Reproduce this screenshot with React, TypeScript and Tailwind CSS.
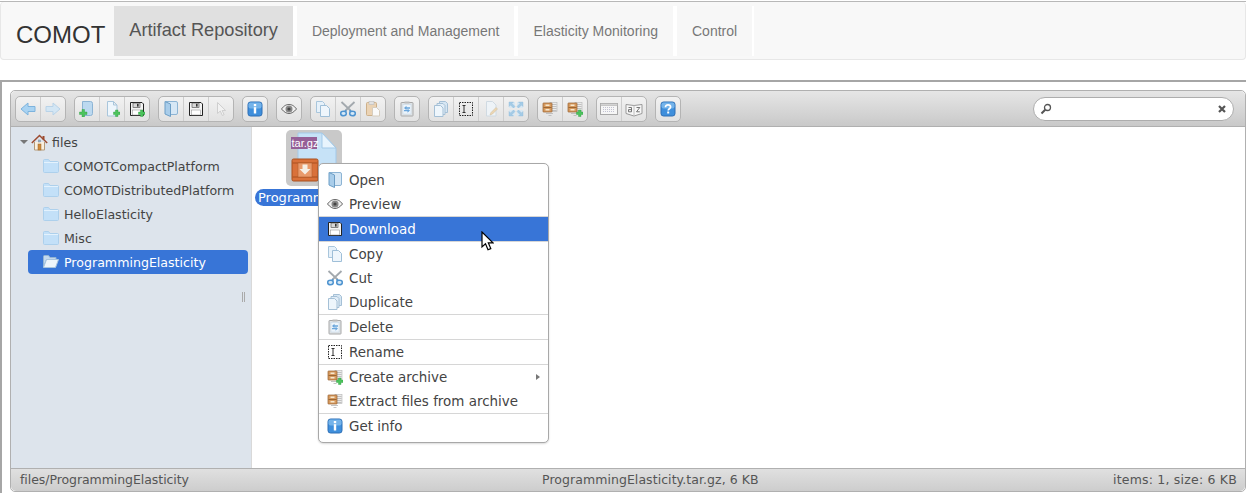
import type { ReactNode } from "react";

type IconProps = { className?: string };

function Svg({ children, className }: { children: ReactNode; className?: string }) {
	return (
		<svg viewBox="0 0 16 16" width="16" height="16" className={className}>
			{children}
		</svg>
	);
}

function Plus() {
	return <path d="M9.500 11h2V9h2.500v2h2v2.500h-2v2h-2.500v-2h-2z" fill="#4cc35c" stroke="#2b9c40" strokeWidth=".4" />;
}

function BackIcon() {
	return (
		<Svg>
			<path d="M1 8l7-6v3.500h7v5H8V14z" fill="#a9d3f2" stroke="#7db3dd" />
		</Svg>
	);
}

function ForwardIcon() {
	return (
		<Svg>
			<path d="M15 8L8 2v3.500H1v5h7V14z" fill="#d3e6f4" stroke="#b9d3e8" />
		</Svg>
	);
}

function FolderBook({ className }: IconProps) {
	return (
		<Svg className={className}>
			<path d="M3 .5h10a1.500 1.500 0 011.500 1.500v10a1.500 1.500 0 01-1.500 1.500H7z" fill="#d6e7f5" stroke="#8db4d4" />
			<path d="M2 .5l5.500 2.500v12.500L2 13z" fill="#a9cdea" stroke="#6c9ec6" />
		</Svg>
	);
}

function PageShape({ fill = "#eef6fc", stroke = "#a9c6dc" }: { fill?: string; stroke?: string }) {
	return <path d="M3.500 .5h6l3.500 3.500v11h-9.500z M9.500 .5V4h3.500" fill={fill} stroke={stroke} />;
}

function MkdirIcon() {
	return (
		<Svg>
			<path d="M3.500 .5h8a2 2 0 012 2v10a2 2 0 01-2 2h-8z" fill="#bcd9f0" stroke="#8db4d4" />
			<path d="M.5 11h2.500V8.500h2.500V11H8v2.500H5.500V16H3v-2.500H.5z" fill="#4cc35c" stroke="#2b9c40" strokeWidth=".4" />
		</Svg>
	);
}

function MkfileIcon() {
	return (
		<Svg>
			<PageShape />
			<Plus />
		</Svg>
	);
}

function FloppyShape() {
	return (
		<>
			<path d="M1.500 1.500h11.500l1.500 1.500v11.500h-13z" fill="#f4f4f4" stroke="#222" />
			<rect x="4" y="2" width="7" height="4.500" fill="#d8d8d8" stroke="#444" strokeWidth=".6" />
			<rect x="8" y="2.800" width="1.600" height="2.800" fill="#333" />
			<rect x="3.500" y="9" width="9" height="5" fill="#fff" stroke="#888" strokeWidth=".5" />
		</>
	);
}

function UploadIcon() {
	return (
		<Svg>
			<FloppyShape />
			<Plus />
		</Svg>
	);
}

function FloppyIcon({ className }: IconProps) {
	return (
		<Svg className={className}>
			<FloppyShape />
		</Svg>
	);
}

function SelectIcon() {
	return (
		<Svg>
			<path d="M4.500 1.500v11l2.800-2.500 2 4.500 1.800-.8-2-4.200h3.500z" fill="#f2f2f2" stroke="#cfcfcf" />
		</Svg>
	);
}

function InfoIcon({ className }: IconProps) {
	return (
		<Svg className={className}>
			<rect x="1" y="1" width="14" height="14" rx="2.500" fill="#3f8fdc" stroke="#2f6fb5" />
			<rect x="1.500" y="1.500" width="13" height="6" rx="2" fill="#74b3ea" />
			<rect x="6.800" y="3" width="2.400" height="2.200" fill="#fff" />
			<rect x="6.800" y="6.200" width="2.400" height="6.300" fill="#fff" />
		</Svg>
	);
}

function EyeIcon({ className }: IconProps) {
	return (
		<Svg className={className}>
			<path d="M.5 8C3 4.500 5.500 3.500 8 3.500s5 1 7.500 4.500C13 11 10.500 12.500 8 12.500S3 11 .5 8z" fill="#f1f1f1" stroke="#666" />
			<circle cx="8" cy="8" r="3.500" fill="#888" />
			<circle cx="8" cy="8" r="1.600" fill="#444" />
		</Svg>
	);
}

function CopyIcon({ className }: IconProps) {
	return (
		<Svg className={className}>
			<path d="M1.500 .5h6l2 2v9h-8z" fill="#e6f1fa" stroke="#a9c6dc" />
			<path d="M5.500 4.500h6l3 3v8h-9z" fill="#eff6fc" stroke="#9fbfd8" />
		</Svg>
	);
}

function CutIcon({ className }: IconProps) {
	return (
		<Svg className={className}>
			<path d="M1.500 1l9 8.500M14.500 1l-9 8.500" stroke="#a3a9ae" strokeWidth="1.800" fill="none" />
			<path d="M6.500 9.500L4 11" stroke="#4f94d0" strokeWidth="2" />
			<path d="M9.500 9.500L12 11" stroke="#4f94d0" strokeWidth="2" />
			<ellipse cx="3.500" cy="12.500" rx="2.800" ry="2.200" fill="#d6e9f7" stroke="#4f94d0" strokeWidth="1.500" />
			<ellipse cx="12.500" cy="12.500" rx="2.800" ry="2.200" fill="#d6e9f7" stroke="#4f94d0" strokeWidth="1.500" />
		</Svg>
	);
}

function PasteIcon() {
	return (
		<Svg>
			<rect x="1.500" y="1.500" width="10" height="13" rx="1" fill="#ebd3b4" stroke="#cdb08a" />
			<rect x="4" y=".5" width="5" height="3" fill="#e2e2e2" stroke="#bdbdbd" strokeWidth=".6" />
			<path d="M7.500 6.500h4l3 3v5.500h-7z" fill="#fafafa" stroke="#d6cdbf" />
		</Svg>
	);
}

function DeleteIcon({ className }: IconProps) {
	return (
		<Svg className={className}>
			<rect x="2" y="1.500" width="12" height="13.500" rx=".5" fill="#dfe3e6" stroke="#a8a8a8" />
			<rect x="5.500" y=".5" width="5" height="2" fill="#bbb" />
			<rect x="4" y="3.500" width="8" height="9.500" fill="#eef5fb" stroke="#c3d6e5" strokeWidth=".5" />
			<path d="M5 7l2.500-2.200v1.500H11v1.400H7.500v1.500zM11 9.500L8.500 7.700v1.200H5v1.400h3.500v1.500z" fill="#6aa6dc" />
		</Svg>
	);
}

function DuplicateIcon({ className }: IconProps) {
	return (
		<Svg className={className}>
			<path d="M6.500 .5h6l2 2v9h-8z" fill="#d6e6f3" stroke="#a5c0d6" />
			<path d="M4 2.500h6l2 2v9H4z" fill="#e2eef8" stroke="#a5c0d6" />
			<path d="M1.500 4.500h6l2.500 2.500v8.500h-8.500z" fill="#eef6fc" stroke="#a5c0d6" />
		</Svg>
	);
}

function RenameIcon({ className }: IconProps) {
	return (
		<Svg className={className}>
			<rect x="1.500" y="1.500" width="13" height="13" fill="none" stroke="#222" strokeDasharray="1.500 1" />
			<path d="M4.500 4.500h3M4.500 11.500h3M6 4.500v7" stroke="#333" fill="none" />
		</Svg>
	);
}

function EditIcon() {
	return (
		<Svg>
			<path d="M3.500 .5h6l3.500 3.500v11h-9.500z" fill="#eef3f7" stroke="#d0dae2" />
			<path d="M7 14l1-2.500 5-5 1.500 1.500-5 5z" fill="#ecd7b4" stroke="#cfbb97" strokeWidth=".5" />
		</Svg>
	);
}

function ResizeIcon() {
	return (
		<Svg>
			<rect x="1" y="1" width="6" height="6" fill="#d9e8f3" />
			<rect x="9" y="1" width="6" height="6" fill="#d9e8f3" />
			<rect x="1" y="9" width="6" height="6" fill="#d9e8f3" />
			<rect x="9" y="9" width="6" height="6" fill="#d9e8f3" />
			<path d="M1 1h4.500L4 2.500 7 5.500 5.500 7 2.500 4 1 5.500zM15 1v4.500L13.500 4l-3 3L9 5.500l3-3L10.500 1zM1 15v-4.500L2.500 12l3-3L7 10.500l-3 3L5.500 15zM15 15h-4.500l1.500-1.500-3-3L10.500 9l3 3 1.500-1.500z" fill="#a4cbe6" stroke="#93bcd9" strokeWidth=".4" />
		</Svg>
	);
}

function ArchiveShape() {
	return (
		<>
			<rect x="8" y="1.500" width="7" height="9" fill="#ececec" stroke="#b5b5b5" strokeWidth=".6" />
			<path d="M10 3.500h4.500M10 5.500h4.500M10 7.500h4.500M10 9.500h4.500" stroke="#a5a5a5" strokeWidth=".6" />
			<rect x="1" y="2" width="9" height="9" rx=".5" fill="#d69a5f" stroke="#96602f" strokeWidth=".7" />
			<path d="M1.500 6.500h8" stroke="#8d5a2a" strokeWidth=".8" />
			<rect x="3.500" y="3.500" width="4" height="1.500" fill="#f5e8d0" />
			<rect x="3.500" y="8" width="4" height="1.500" fill="#f5e8d0" />
			<path d="M4 12.500h7M6.500 14.500h3" stroke="#b5b5b5" strokeWidth=".8" />
		</>
	);
}

function ExtractIcon({ className }: IconProps) {
	return (
		<Svg className={className}>
			<ArchiveShape />
		</Svg>
	);
}

function ArchiveIcon({ className }: IconProps) {
	return (
		<Svg className={className}>
			<ArchiveShape />
			<Plus />
		</Svg>
	);
}

function ViewIcon() {
	return (
		<svg viewBox="0 0 18 16" width="18" height="16">
			<rect x=".5" y="2.500" width="17" height="11" fill="#f6f6f6" stroke="#a8a8a8" />
			<rect x=".5" y="2.500" width="17" height="2" fill="#d3d3d3" stroke="#a8a8a8" strokeWidth=".5" />
			<path d="M3 6.500h12M3 8.500h12M3 10.500h12" stroke="#c2c2d2" strokeDasharray="1 1" fill="none" />
		</svg>
	);
}

function SortIcon() {
	return (
		<svg viewBox="0 0 18 16" width="18" height="16">
			<path d="M1 3.500l8 1 8-1v9l-8 2.500-8-2.500z" fill="#f7f7f7" stroke="#999" />
			<path d="M9 4.500v10" stroke="#c0c0c0" />
			<path d="M3.500 6.500h3v4.300h-3v-2.200h3M11.500 6.500h3.300l-3.300 4.300h3.300" fill="none" stroke="#666" strokeWidth=".9" />
		</svg>
	);
}

function HelpIcon() {
	return (
		<Svg>
			<rect x="1" y="1" width="14" height="14" rx="2.500" fill="#3f8fdc" stroke="#2f6fb5" />
			<rect x="1.500" y="1.500" width="13" height="6" rx="2" fill="#74b3ea" />
			<path d="M5.500 6.200C5.500 4.500 6.700 3.800 8 3.800c1.500 0 2.600.8 2.600 2.100 0 1.800-2.400 1.900-2.400 3.600" fill="none" stroke="#fff" strokeWidth="1.700" />
			<rect x="7.200" y="10.500" width="2" height="2" fill="#fff" />
		</Svg>
	);
}

function FolderIcon() {
	return (
		<svg viewBox="0 0 16 14" width="16" height="14">
			<path d="M.5 1.500a1 1 0 011-1h4l1.500 2h7.500a1 1 0 011 1v9a1 1 0 01-1 1h-13a1 1 0 01-1-1z" fill="#c3e0f8" stroke="#add0ec" />
			<path d="M1 3.500h14" stroke="#e4f2fd" />
		</svg>
	);
}

function OpenFolderIcon() {
	return (
		<svg viewBox="0 0 16 14" width="16" height="14">
			<path d="M.5 1.500a1 1 0 011-1h4l1.500 2h6v2H3.500L.5 12z" fill="#c3d9ee" stroke="#93b4d3" />
			<path d="M3.500 4.500h12l-3 8H.5z" fill="#eef5fb" stroke="#a8c5de" />
		</svg>
	);
}

function HomeIcon() {
	return (
		<svg viewBox="0 0 17 17" width="17" height="17">
			<path d="M3.500 8v8h10V8" fill="#f9efdf" stroke="#b59a78" />
			<path d="M.8 9l7.700-7.500L16.200 9" fill="none" stroke="#9c4a2f" strokeWidth="1.500" />
			<rect x="11.500" y="2" width="2" height="3.500" fill="#9c4a2f" />
			<rect x="7" y="10" width="3" height="6" fill="#d08a3a" stroke="#9b6424" strokeWidth=".5" />
			<rect x="7.500" y="6" width="2" height="2" fill="#8fb6d8" stroke="#777" strokeWidth=".4" />
		</svg>
	);
}

function Cursor() {
	return (
		<svg viewBox="0 0 13 20" width="13" height="20" className="absolute left-[229px] top-[104px]">
			<path d="M1 1v15l3.500-3.200 2.500 6 2.800-1.200-2.500-5.800H12z" fill="#fff" stroke="#000" strokeWidth="1.200" />
		</svg>
	);
}

const toolbarSets: ReactNode[][] = [
	[<BackIcon />, <ForwardIcon />],
	[<MkdirIcon />, <MkfileIcon />, <UploadIcon />],
	[<FolderBook />, <FloppyIcon />, <SelectIcon />],
	[<InfoIcon />],
	[<EyeIcon />],
	[<CopyIcon />, <CutIcon />, <PasteIcon />],
	[<DeleteIcon />],
	[<DuplicateIcon />, <RenameIcon />, <EditIcon />, <ResizeIcon />],
	[<ExtractIcon />, <ArchiveIcon />],
	[<ViewIcon />, <SortIcon />],
	[<HelpIcon />],
];

function ToolbarSet({ icons }: { icons: ReactNode[] }) {
	return (
		<div className="flex h-[26px] rounded-[5px] border border-[#b4b4b4] bg-gradient-to-b from-[#f2f2f2] to-[#e2e2e2]">
			{icons.map((icon, i) => (
				<div
					key={i}
					className="flex w-[25px] items-center justify-center border-l border-[#cdcdcd] first:w-[24px] first:border-l-0"
				>
					{icon}
				</div>
			))}
		</div>
	);
}

function NavTab({ label, active }: { label: string; active?: boolean }) {
	if (active) {
		return (
			<div className="flex h-[50px] items-center bg-[#e0e0e0] px-[15px] text-[18.200px] text-[#555]">
				{label}
			</div>
		);
	}
	return (
		<div className="flex h-[50px] items-center bg-[#f7f7f7] px-[15px] pt-[1px] text-[14px] text-[#777]">
			{label}
		</div>
	);
}

function TreeRow({ label, selected }: { label: string; selected?: boolean }) {
	return (
		<div
			className={
				selected
					? "flex h-[24px] items-center rounded-[4px] bg-[#3875d7] pl-[15px] text-white"
					: "flex h-[24px] items-center pl-[15px] text-[#444]"
			}
		>
			{selected ? <OpenFolderIcon /> : <FolderIcon />}
			<span className="ml-[5px] pt-[2px]">{label}</span>
		</div>
	);
}

function MenuRow({
	icon,
	label,
	hover,
	arrow,
}: {
	icon: ReactNode;
	label: string;
	hover?: boolean;
	arrow?: boolean;
}) {
	return (
		<div
			className={
				hover
					? "flex h-[24px] items-center bg-[#3875d7] pl-[8px] text-white"
					: "flex h-[24px] items-center pl-[8px] text-[#444]"
			}
		>
			{icon}
			<span className="ml-[6px] pt-[2px]">{label}</span>
			{arrow && (
				<span className="ml-auto mr-[8px] h-0 w-0 border-y-[3.500px] border-l-[4px] border-y-transparent border-l-[#777]" />
			)}
		</div>
	);
}

function MenuSep() {
	return <div className="h-px bg-[#d6d6d6]" />;
}

function ContextMenu() {
	return (
		<div className="absolute left-[66px] top-[36px] w-[231px] rounded-[5px] border border-[#a8a8a8] bg-white py-[4px] text-[13.440px] shadow-[0_1px_2px_rgba(0,0,0,0.15)]">
			<MenuRow icon={<FolderBook />} label="Open" />
			<MenuRow icon={<EyeIcon />} label="Preview" />
			<MenuSep />
			<MenuRow icon={<FloppyIcon />} label="Download" hover />
			<MenuSep />
			<MenuRow icon={<CopyIcon />} label="Copy" />
			<MenuRow icon={<CutIcon />} label="Cut" />
			<MenuRow icon={<DuplicateIcon />} label="Duplicate" />
			<MenuSep />
			<MenuRow icon={<DeleteIcon />} label="Delete" />
			<MenuSep />
			<MenuRow icon={<RenameIcon />} label="Rename" />
			<MenuSep />
			<MenuRow icon={<ArchiveIcon />} label="Create archive" arrow />
			<MenuRow icon={<ExtractIcon />} label="Extract files from archive" />
			<MenuSep />
			<MenuRow icon={<InfoIcon />} label="Get info" />
		</div>
	);
}

function TarIcon() {
	return (
		<div className="ml-[34px] mt-[3px] h-[56px] w-[56px] rounded-[5px] bg-[#c9c9c9]">
			<svg viewBox="0 0 56 56" width="56" height="56">
				<path d="M12 3h24l14 15v32H12z" fill="#c6e2f7" stroke="#a3c9e8" />
				<path d="M36 3l14 15H36z" fill="#e8f4fd" stroke="#a3c9e8" />
				<rect x="5" y="7" width="26" height="12" fill="#955f97" />
				<text x="5.500" y="16.800" fontSize="11" fill="#fff" fontFamily="'Liberation Sans', sans-serif">
					tar.gz
				</text>
				<rect x="6" y="29" width="26" height="22" rx="1.500" fill="#d9713a" stroke="#a9501f" />
				<path d="M6.500 33h25M6.500 47h25" stroke="#a9501f" />
				<rect x="12" y="33" width="14" height="14" fill="#e99a6b" stroke="#b4602f" strokeWidth=".6" />
				<path d="M16.500 34.500h5v4.500h3l-5.500 5.500-5.500-5.500h3z" fill="#f6efe6" />
			</svg>
		</div>
	);
}

export default function App() {
	return (
		<div className="h-[493px] w-[1246px] overflow-hidden bg-white font-['Liberation_Sans',Arial,sans-serif]">
			<div className="mt-px h-px bg-[#b8b8b8]" />
			<div className="h-[58px] rounded-[4px] border-x border-b border-[#e7e7e7] bg-[#f8f8f8]">
				<div className="flex items-start pt-[4px]">
					<div className="ml-[15px] mr-[9px] flex h-[50px] items-center pt-[7px] text-[24px] leading-none text-[#333]">
						COMOT
					</div>
					<div className="flex gap-[4px] bg-white pr-[2px]">
						<NavTab label="Artifact Repository" active />
						<NavTab label="Deployment and Management" />
						<NavTab label="Elasticity Monitoring" />
						<NavTab label="Control" />
					</div>
				</div>
			</div>

			<div className="mt-[20px] h-[413px] border-l-2 border-t-2 border-[#a6a6a6] pl-[8px] pt-[8px]">
				<div className="flex h-[402px] w-[1236px] flex-col rounded-[5px] border border-[#b0b0b0] font-['DejaVu_Sans',sans-serif] text-[12.600px]">
					<div className="flex h-[36px] shrink-0 items-center gap-[8px] rounded-t-[5px] border-b border-[#b0b0b0] bg-gradient-to-b from-[#e6e6e6] to-[#c9c9c9] pl-[4px]">
						{toolbarSets.map((icons, i) => (
							<ToolbarSet key={i} icons={icons} />
						))}
						<div className="ml-auto mr-[11px] flex h-[24px] w-[201px] items-center justify-between rounded-full border border-[#adadad] bg-white px-[6px]">
							<svg viewBox="0 0 12 12" width="12" height="12">
								<circle cx="7.500" cy="4.500" r="3" fill="none" stroke="#555" strokeWidth="1.300" />
								<path d="M5.200 6.800L1.500 10.500" stroke="#555" strokeWidth="2" />
							</svg>
							<svg viewBox="0 0 10 10" width="10" height="10">
								<path d="M2 2l6 6M8 2l-6 6" stroke="#555" strokeWidth="2.200" />
							</svg>
						</div>
					</div>

					<div className="flex min-h-0 flex-1">
						<div className="relative w-[241px] shrink-0 border-r border-[#d9d9d9] bg-[#dde4ec] pl-[1px] pr-[3px] pt-[3px]">
							<div className="flex h-[24px] items-center pl-[8px] text-[#444]">
								<span className="mr-[3px] h-0 w-0 border-x-[4px] border-t-[4px] border-x-transparent border-t-[#777]" />
								<HomeIcon />
								<span className="ml-[4px] pt-[2px]">files</span>
							</div>
							<div className="ml-[16px]">
								<TreeRow label="COMOTCompactPlatform" />
								<TreeRow label="COMOTDistributedPlatform" />
								<TreeRow label="HelloElasticity" />
								<TreeRow label="Misc" />
								<TreeRow label="ProgrammingElasticity" selected />
							</div>
							<div className="absolute right-[6px] top-[165px] h-[10px] w-[3px] border-x border-[#aaa]" />
						</div>

						<div className="relative min-w-0 flex-1">
							<TarIcon />
							<div className="ml-[3px] mt-[3px] h-[17px] w-[118px] rounded-full bg-[#3875d7] px-[3px] text-[13px] leading-[17px] text-white">
								Programm
							</div>
							<ContextMenu />
							<Cursor />
						</div>
					</div>

					<div className="flex h-[23px] shrink-0 items-center rounded-b-[5px] border-t border-[#b0b0b0] bg-gradient-to-b from-[#e0e0e0] to-[#cdcdcd] px-[8px] text-[12.500px] text-[#555]">
						<span className="w-[523px] pl-[1px] tracking-[-0.06px]">files/ProgrammingElasticity</span>
						<span className="tracking-[0.06px]">ProgrammingElasticity.tar.gz, 6 KB</span>
						<span className="ml-auto tracking-[0.2px]">items: 1, size: 6 KB</span>
					</div>
				</div>
			</div>
		</div>
	);
}
